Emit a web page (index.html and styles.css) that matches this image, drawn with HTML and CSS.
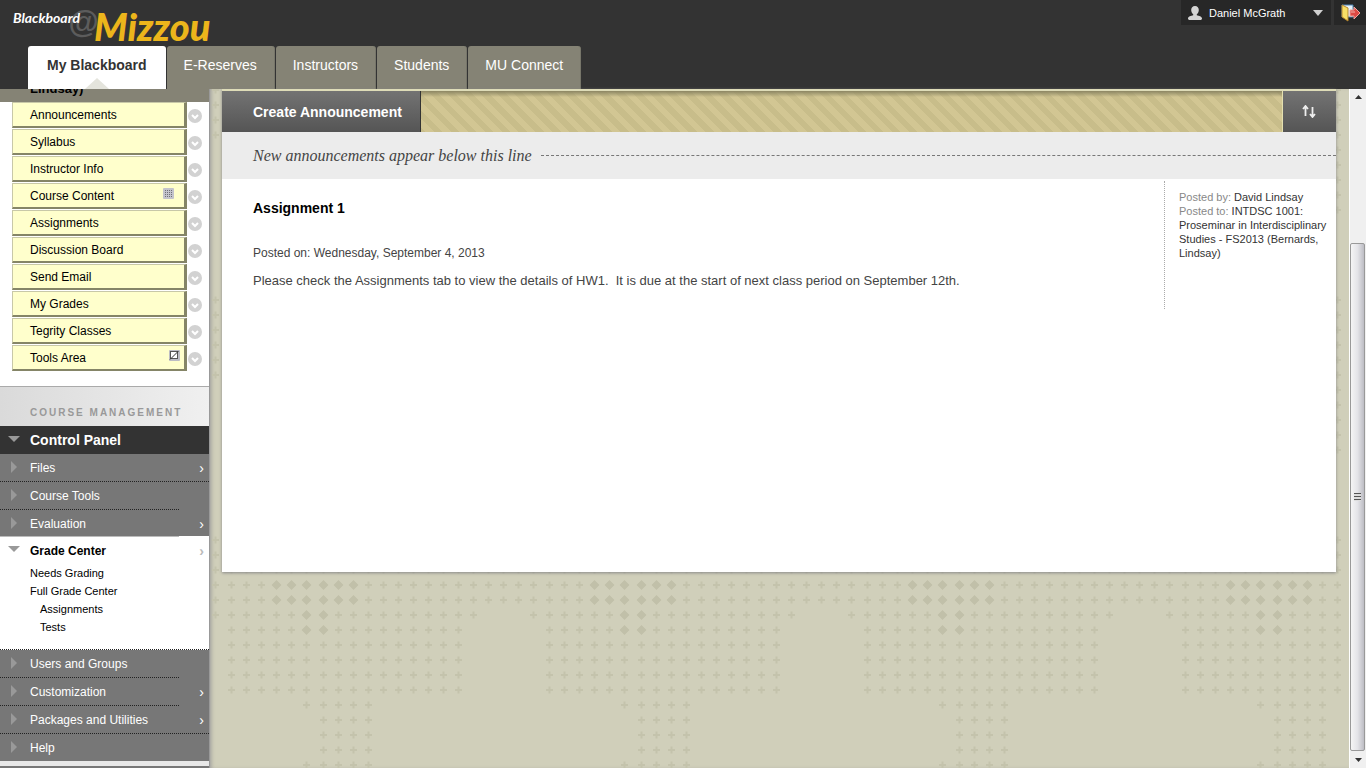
FILE: index.html
```html
<!DOCTYPE html>
<html lang="en">
<head>
<meta charset="utf-8">
<title>Blackboard@Mizzou</title>
<link rel="stylesheet" href="styles.css">
</head>
<body>
<svg class="defs" width="0" height="0" aria-hidden="true">
  <symbol id="chevron" viewBox="0 0 14 14">
    <circle cx="7" cy="7" r="7" fill="#d2d2d2"/>
    <path d="M4 6l3 3 3-3" fill="none" stroke="#fff" stroke-width="2"/>
  </symbol>
</svg>
<header class="top">
  <a class="logo" href="#" aria-label="Blackboard at Mizzou"><span class="logo-at">@</span><span class="logo-small">Blackboard</span><span class="logo-big">Mizzou</span></a>
  <nav class="tabs">
    <a class="tab active" href="#">My Blackboard</a>
    <a class="tab" href="#">E-Reserves</a>
    <a class="tab" href="#">Instructors</a>
    <a class="tab" href="#">Students</a>
    <a class="tab" href="#">MU Connect</a>
  </nav>
  <div class="account">
    <button class="user" type="button">
      <svg width="14" height="14" viewBox="0 0 14 14" aria-hidden="true"><path d="M7 0C4.500 0 3.200 1.800 3.200 4c0 1.900.8 3.500 2 4.200v1C3 9.700 0 10.500 0 12.500V13l1 1h12l1-1v-.5c0-2-3-2.800-5.200-3.300v-1c1.200-.7 2-2.300 2-4.200C10.800 1.800 9.500 0 7 0z" fill="#d4d4d4"/></svg>
      <span class="user-name">Daniel McGrath</span>
      <svg width="10" height="6" viewBox="0 0 10 6" aria-hidden="true"><path d="M0 0h10L5 6z" fill="#d0d0d0"/></svg>
    </button>
    <button class="logout" type="button" aria-label="Log out">
      <svg width="20" height="18" viewBox="0 0 20 18" aria-hidden="true">
        <path d="M1 1h11v12H1z" fill="#e8f2fa" stroke="#4f83b0"/>
        <path d="M1 1l6 3v13l-6-4z" fill="#f8df66" stroke="#b7862c"/>
        <path d="M9 6h4V3l6 6-6 6v-3H9z" fill="#dd4a44" stroke="#f0a49d"/>
        <path d="M10 8h4" stroke="#f5b3a9"/>
      </svg>
    </button>
  </div>
</header>
<div class="body">
  <aside class="sidebar">
    <div class="course-title"><span>Lindsay)</span></div>
    <ul class="menu">
      <li><a href="#">Announcements</a><button type="button" aria-label="Options"><svg width="14" height="14"><use href="#chevron"/></svg></button></li>
      <li><a href="#">Syllabus</a><button type="button" aria-label="Options"><svg width="14" height="14"><use href="#chevron"/></svg></button></li>
      <li><a href="#">Instructor Info</a><button type="button" aria-label="Options"><svg width="14" height="14"><use href="#chevron"/></svg></button></li>
      <li><a href="#">Course Content<svg class="flag inset" width="11" height="11" viewBox="0 0 11 11" aria-hidden="true"><rect width="11" height="11" rx="1" fill="#c4c4cc"/><path d="M2 2.500h8M2 4.500h8M2 6.500h8M2 8.500h8" stroke="#707078" stroke-dasharray="1 1"/></svg></a><button type="button" aria-label="Options"><svg width="14" height="14"><use href="#chevron"/></svg></button></li>
      <li><a href="#">Assignments</a><button type="button" aria-label="Options"><svg width="14" height="14"><use href="#chevron"/></svg></button></li>
      <li><a href="#">Discussion Board</a><button type="button" aria-label="Options"><svg width="14" height="14"><use href="#chevron"/></svg></button></li>
      <li><a href="#">Send Email</a><button type="button" aria-label="Options"><svg width="14" height="14"><use href="#chevron"/></svg></button></li>
      <li><a href="#">My Grades</a><button type="button" aria-label="Options"><svg width="14" height="14"><use href="#chevron"/></svg></button></li>
      <li><a href="#">Tegrity Classes</a><button type="button" aria-label="Options"><svg width="14" height="14"><use href="#chevron"/></svg></button></li>
      <li><a href="#">Tools Area<svg class="flag" width="11" height="11" viewBox="0 0 11 11" aria-hidden="true"><rect width="11" height="11" rx="1" fill="#bdbdc4"/><rect x="1.500" y="1.500" width="7" height="7" fill="#fff" stroke="#555"/><path d="M1 9.500L9.500 1" stroke="#333"/></svg></a><button type="button" aria-label="Options"><svg width="14" height="14"><use href="#chevron"/></svg></button></li>
    </ul>
    <h2 class="mgmt">COURSE MANAGEMENT</h2>
    <div class="panel-head">Control Panel</div>
    <ul class="cp">
      <li class="row wide"><a href="#">Files</a><span class="go">›</span></li>
      <li class="row"><a href="#">Course Tools</a></li>
      <li class="row pale"><a href="#">Evaluation</a><span class="go">›</span></li>
      <li class="open">
        <div class="row-open"><a href="#">Grade Center</a><span class="go">›</span></div>
        <ul class="sub">
          <li><a href="#">Needs Grading</a></li>
          <li><a href="#">Full Grade Center</a></li>
          <li class="deep"><a href="#">Assignments</a></li>
          <li class="deep"><a href="#">Tests</a></li>
        </ul>
      </li>
      <li class="row"><a href="#">Users and Groups</a></li>
      <li class="row"><a href="#">Customization</a><span class="go">›</span></li>
      <li class="row wide"><a href="#">Packages and Utilities</a><span class="go">›</span></li>
      <li class="row last"><a href="#">Help</a></li>
    </ul>
    <div class="foot"></div>
  </aside>
  <main class="main">
    <svg class="backdrop" width="100%" height="100%" aria-hidden="true">
      <defs>
        <pattern id="plus" width="15" height="15" patternUnits="userSpaceOnUse"><path d="M4 8h7M7.500 4.500v7" stroke="#c4c3ac" stroke-width="2"/></pattern>
        <pattern id="diamond" width="15" height="15" patternUnits="userSpaceOnUse"><path d="M7.500 3l5 5-5 5-5-5z" fill="#c1c0a9"/></pattern>
        <pattern id="columns" x="14" y="488" width="318" height="240" patternUnits="userSpaceOnUse">
          <path d="M0 0h45v120H0zM45 30h30v90H45zM75 60h15v75H75z" fill="url(#plus)"/>
          <path d="M75 180h15v15H75z" fill="url(#plus)"/>
          <path d="M0 195h90v45H0z" fill="url(#plus)"/>
          <path d="M45 0h45v30H45zM75 30h15v30H75z" fill="url(#diamond)"/>
          <g transform="translate(92 0)">
            <path d="M45 0h180v30H45zM30 30h135v15H30zM210 30h15v15h-15zM0 60h150v60H0zM15 45h135v15H15zM15 30h15v15H15z" fill="url(#plus)"/>
            <path d="M0 120h60v15H0zM0 135h60v45H0zM0 180h60v15H0zM0 195h225v45H0z" fill="url(#plus)"/>
            <path d="M0 0h45v30H0zM0 30h15v30H0z" fill="url(#diamond)"/>
          </g>
        </pattern>
      </defs>
      <rect width="100%" height="100%" fill="url(#columns)"/>
    </svg>
    <section class="sheet">
      <div class="actions">
        <button class="create" type="button">Create Announcement</button>
        <button class="reorder" type="button" aria-label="Reorder">
          <svg width="14" height="13" viewBox="0 0 14 13" aria-hidden="true"><path d="M3.500 11V2M1 4l2.500-3L6 4M10.500 2v9M8 9l2.500 3L13 9" fill="none" stroke="#eee" stroke-width="1.800"/></svg>
        </button>
      </div>
      <div class="divider"><em>New announcements appear below this line</em><span class="dashes"></span></div>
      <article class="post">
        <div class="post-text">
          <h3>Assignment 1</h3>
          <p class="date">Posted on: Wednesday, September 4, 2013</p>
          <p>Please check the Assignments tab to view the details of HW1.&nbsp; It is due at the start of next class period on September 12th.</p>
        </div>
        <div class="meta">
          <div><span>Posted by:</span> David Lindsay</div>
          <div><span>Posted to:</span> INTDSC 1001: Proseminar in Interdisciplinary Studies - FS2013 (Bernards, Lindsay)</div>
        </div>
      </article>
    </section>
  </main>
  <div class="scroll" aria-hidden="true">
    <svg width="17" height="17"><path d="M5 10l3.500-4 3.500 4z" fill="#333"/></svg>
    <div class="gap"></div>
    <div class="thumb"><i></i></div>
    <svg width="17" height="17"><path d="M5 7l3.500 4L12 7z" fill="#333"/></svg>
  </div>
</div>
</body>
</html>
```

FILE: styles.css
```css
* { box-sizing: border-box; }
body {
  margin: 0;
  height: 100vh;
  overflow: hidden;
  display: flex;
  flex-direction: column;
  font: 13px/16px "Liberation Sans", Arial, sans-serif;
  color: #333;
  background: #d0cfba;
}
ul, h2, h3, p { margin: 0; padding: 0; list-style: none; }
a { color: inherit; text-decoration: none; }
button { border: 0; padding: 0; margin: 0; background: none; font: inherit; color: inherit; }
svg { display: block; flex: none; }
.defs { position: absolute; }

.top {
  position: relative;
  flex: none;
  height: 89px;
  display: flex;
  align-items: flex-end;
  padding-left: 28px;
  background: #333;
}
.logo { position: absolute; left: 0; top: 0; width: 240px; height: 46px; font-family: Lato, sans-serif; font-style: italic; font-weight: 900; }
.logo span { position: absolute; white-space: nowrap; }
.logo-at { left: 68px; top: 6px; font: italic 700 31px/34px "Liberation Sans", sans-serif; color: #5c5c5c; }
.logo-small { left: 13px; top: 9px; font: italic 700 14px/18px Lato, sans-serif; color: #fff; }
.logo-big { left: 94px; top: 5px; font-size: 38px; line-height: 42px; color: #ecb51b; }
.tabs { display: flex; gap: 1px; }
.tab {
  height: 43px;
  padding: 0 17px;
  font-size: 14px;
  line-height: 38px;
  color: #fff;
  background: #858375;
  border-right: 1px solid #77766a;
  border-radius: 3px 3px 0 0;
}
.tab.active {
  position: relative;
  padding: 0 19px;
  font-weight: 700;
  color: #333;
  background: #fff;
  border-right: 0;
}
.tab.active::after {
  content: "";
  position: absolute;
  left: 50%;
  bottom: 0;
  margin-left: -12px;
  border: 12px solid transparent;
  border-top: 0;
  border-bottom: 11px solid #e4e4dc;
}
.account { position: absolute; right: 0; top: 0; display: flex; gap: 3px; height: 25px; font-size: 11px; color: #fff; }
.user { width: 150px; display: flex; align-items: center; padding: 0 8px 0 7px; background: #272727; text-align: left; }
.user-name { flex: 1; padding-left: 7px; }
.logout { width: 32px; padding-left: 7px; background: #272727; }

.body { flex: 1; min-height: 0; display: flex; }
.sidebar { position: relative; flex: none; width: 210px; background: #fff; border-right: 1px solid #999; overflow: hidden; display: flex; flex-direction: column; font-size: 12px; }
.course-title { flex: none; height: 13px; background: #858375; display: flex; align-items: flex-end; padding: 0 30px 5px; overflow: hidden; font-size: 13px; font-weight: 700; color: #000; }
.menu { padding: 0 0 14px 12px; }
.menu li { height: 27px; display: flex; gap: 1px; }
.menu a {
  position: relative;
  width: 175px;
  height: 26px;
  padding-left: 17px;
  line-height: 25px;
  color: #000;
  background: #ffffcc;
  border: 1px solid #c8c8a8;
  border-right: 3px solid #858567;
  border-bottom: 2px solid #858567;
}
.menu button { height: 27px; color: #fff; }
.flag { position: absolute; right: 4px; top: 4px; }
.flag.inset { right: 10px; }
.mgmt {
  height: 40px;
  padding: 18px 0 0 30px;
  border-top: 1px solid #aaa;
  background: linear-gradient(90deg, #dadada, #f0f0f0);
  font-size: 10px;
  line-height: 16px;
  letter-spacing: 2px;
  color: #999;
  white-space: nowrap;
}
.panel-head { position: relative; height: 28px; padding-left: 30px; font-size: 14px; font-weight: 700; line-height: 29px; color: #fff; background: #333; }
.panel-head::before, .row-open::before { content: ""; position: absolute; left: 8px; top: 10px; border: 6px solid transparent; border-top-color: #999; border-bottom: 0; }
.cp { color: #fff; }
.row, .row-open { position: relative; display: flex; justify-content: space-between; padding: 0 5px 0 30px; height: 28px; line-height: 28px; background: #777; }
.row::before { content: ""; position: absolute; left: 11px; top: 7px; border: 6px solid transparent; border-left-color: #999; border-right: 0; }
.row::after { content: ""; position: absolute; left: 0; bottom: 0; width: 179px; border-bottom: 1px dotted #222; }
.row.wide::after { width: 100%; }
.row.pale { height: 26px; }
.row.pale::after { border-bottom: 1px solid #bbb; bottom: -1px; z-index: 1; }
.row.last { height: 27px; }
.row.last::after { border: 0; }
.go { font-size: 14px; }
.open { height: 114px; background: #fff; color: #000; border-bottom: 1px dotted #222; }
.row-open { background: #fff; font-weight: 700; line-height: 30px; }
.row-open .go { color: #bbb; }
.sub { padding-left: 30px; font-size: 11px; line-height: 18px; }
.sub .deep { padding-left: 10px; }
.foot { flex: 1; background: #e8e8e8; border-bottom: 2px solid #777; }

.main { position: relative; flex: 1; min-width: 0; padding: 0 13px 0 12px; box-shadow: inset 3px 0 4px -2px #999; }
.backdrop { position: absolute; left: 0; top: 0; }
.sheet { position: relative; height: 483px; background: #fff; border-top: 2px solid #dedcb8; box-shadow: 0 1px 3px #888; }
.actions {
  height: 41px;
  display: flex;
  justify-content: space-between;
  background: linear-gradient(#8c8663, transparent 6px), repeating-linear-gradient(45deg, #d2c693 0 6px, #c8bd8a 6px 12px);
}
.create { padding: 0 18px 0 31px; font-size: 14px; font-weight: 700; color: #fff; background: linear-gradient(#737373, #555); border-right: 1px solid #333; }
.reorder { width: 54px; padding-left: 19px; background: linear-gradient(#737373, #555); border-left: 1px solid #e4e0b0; }
.divider { display: flex; align-items: center; gap: 9px; height: 47px; padding-left: 31px; background: #ececec; font: 16px/18px "Liberation Serif", Georgia, serif; color: #444; }
.dashes { flex: 1; border-top: 1px dashed #777; }
.post { display: flex; padding: 2px 0 0 31px; }
.post-text { flex: 1; padding-top: 19px; color: #444; }
.post-text h3 { margin-bottom: 29px; font-size: 14px; color: #000; }
.post-text p { margin-bottom: 12px; }
.post-text .date { font-size: 12px; }
.meta { width: 172px; height: 128px; padding: 9px 6px 0 14px; border-left: 1px dotted #aaa; font-size: 11px; line-height: 14px; color: #333; }
.meta span { color: #888; }

.scroll { flex: none; width: 17px; display: flex; flex-direction: column; background: #f0f0f0; border-left: 1px solid #fff; }
.gap { height: 137px; }
.thumb { flex: 1; display: flex; align-items: center; justify-content: center; margin-right: 1px; border: 1px solid #999; border-radius: 2px; background: linear-gradient(90deg, #f5f5f5, #e4e4e8 50%, #bdbdc4); }
.thumb i { width: 7px; height: 8px; background: repeating-linear-gradient(#555 0 1px, #ddd 1px 3px); }
```
